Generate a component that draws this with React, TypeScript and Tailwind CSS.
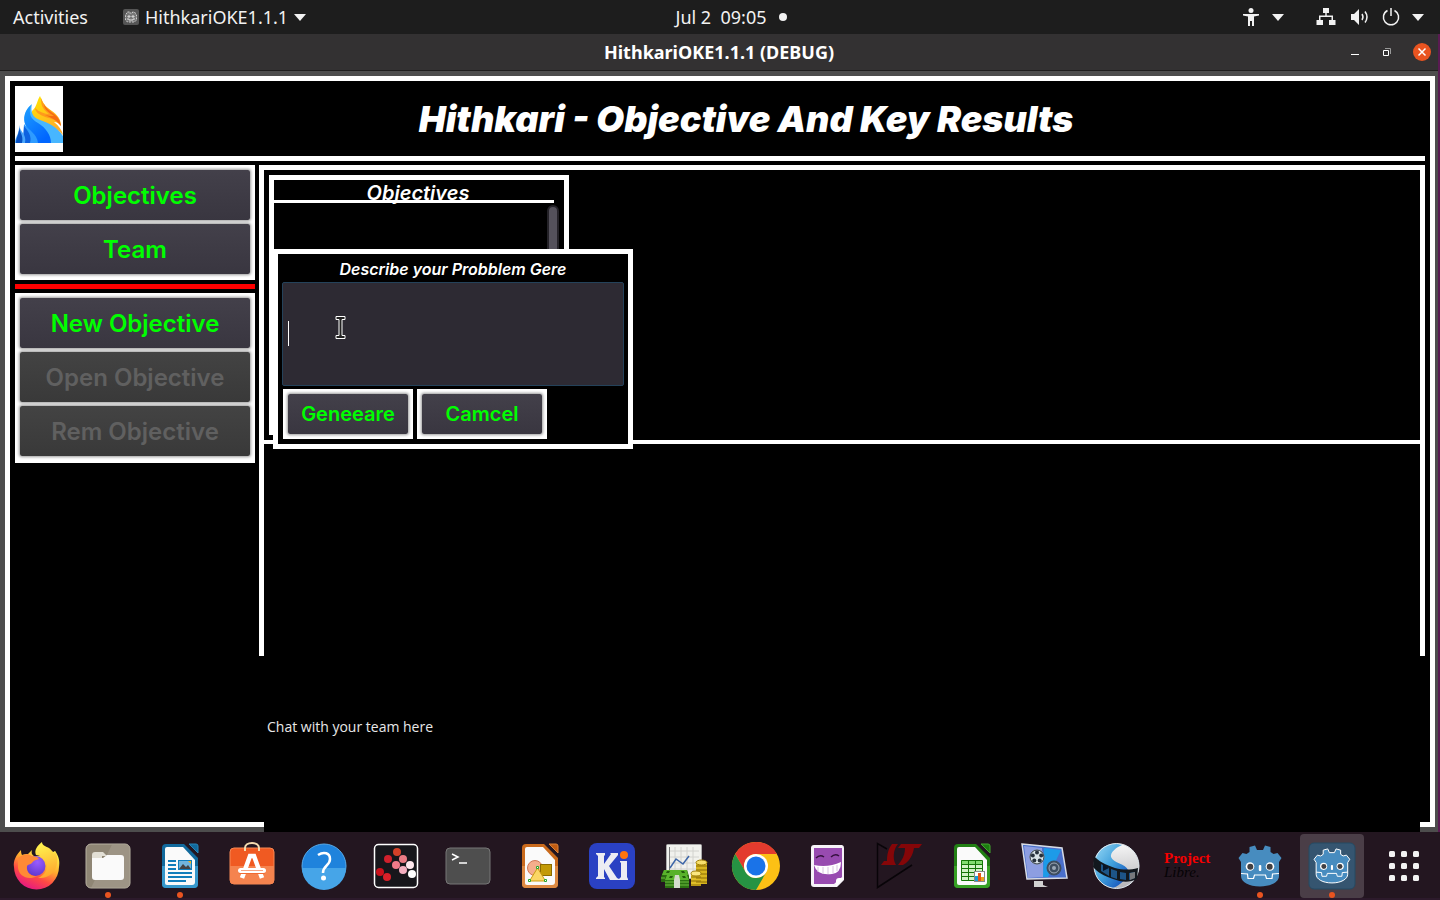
import type { ReactNode } from "react";

const dockIcons: { name: string; running?: boolean; active?: boolean; art: ReactNode }[] = [
  {
    name: "Firefox",
    art: (
      <>
        <defs>
          <linearGradient id="fxBody" x1="0.8" y1="0.1" x2="0.3" y2="1">
            <stop offset="0" stopColor="#fff04a" />
            <stop offset="0.35" stopColor="#ffab2e" />
            <stop offset="0.65" stopColor="#ff4a44" />
            <stop offset="1" stopColor="#e31587" />
          </linearGradient>
          <radialGradient id="fxGlobe" cx="0.6" cy="0.3" r="0.8">
            <stop offset="0" stopColor="#9a5cff" />
            <stop offset="1" stopColor="#5a35c8" />
          </radialGradient>
          <linearGradient id="fxTail" x1="0.3" y1="0" x2="0.5" y2="1">
            <stop offset="0" stopColor="#fff650" />
            <stop offset="1" stopColor="#ffa42c" />
          </linearGradient>
        </defs>
        <path d="M9 8c0 2 .4 4 1 5 2-1 4-1 6-1l4-4c-1 3 0 5 2 6h12l9-5c4 5 5 11 4 16a22.500 22.500 0 0 1-45 0C1 19 4 13 9 8z" fill="url(#fxBody)" />
        <path d="M30 0c-5 4-8 8-6 13 7 1 11 5 11 10 0 7-4 11-9 13 10 1 17-5 19-14 1-5 0-9-2-13l-1 3c-1-3-3-4-5-6-4-2-7-3-7-6z" fill="url(#fxTail)" />
        <circle cx="23.500" cy="24" r="10" fill="url(#fxGlobe)" />
        <path d="M6 16c5-4 10-5 14-2 3 1 5 0 7 3-3 1-5 1-7 4-2 2-4 1-5 3-1 7 5 11 10 10-9 5-18 0-19-8z" fill="#ff8a35" />
      </>
    ),
  },
  {
    name: "Files",
    running: true,
    art: (
      <>
        <rect x="2" y="2" width="44" height="44" rx="5" fill="#8f8675" stroke="#b8b1a2" />
        <path d="M28 2.500h13a5 5 0 0 1 5 5V41a5 5 0 0 1-5 5H7z" fill="#a79f8f" opacity="0.6" />
        <path d="M8 13a3 3 0 0 1 3-3h8l4 4h-5v9H8z" fill="#e2dfd5" />
        <path d="M8 16h11l4-3h14a3 3 0 0 1 3 3v19a3 3 0 0 1-3 3H11a3 3 0 0 1-3-3z" fill="#fafafa" />
      </>
    ),
  },
  {
    name: "LibreOffice Writer",
    running: true,
    art: (
      <>
        <path d="M10 2h18l14 14v26a4 4 0 0 1-4 4H10a4 4 0 0 1-4-4V6a4 4 0 0 1 4-4z" fill="#11699c" />
        <path d="M6 24h36v18a4 4 0 0 1-4 4H10a4 4 0 0 1-4-4z" fill="#3698cc" />
        <path d="M11 5h16l12 13v22a3 3 0 0 1-3 3H11a2 2 0 0 1-2-2V7a2 2 0 0 1 2-2z" fill="#fafafa" />
        <path d="M33 2h7a2 2 0 0 1 2 2v7z" fill="#11699c" stroke="#2685b8" />
        <path d="M12 19h8M12 23h8M12 27h8M12 31h24M12 35h24M12 39h18" stroke="#117dbb" strokeWidth="2" />
        <rect x="22.500" y="18.500" width="13" height="9" fill="#72b5dc" stroke="#117dbb" />
        <path d="M23 27l4-5 3 3 2-2 3 4z" fill="#444" />
        <path d="M32 19h3v3z" fill="#f3b51d" />
      </>
    ),
  },
  {
    name: "Ubuntu Software",
    art: (
      <>
        <rect x="2" y="6" width="44" height="36" rx="4" fill="#f05a22" stroke="#f78855" />
        <path d="M2 24h44v14a4 4 0 0 1-4 4H6a4 4 0 0 1-4-4z" fill="#f5834e" />
        <path d="M17 9V6c0-3 3-5 7-5s7 2 7 5v3" fill="none" stroke="#f5dcb0" strokeWidth="2" />
        <path d="M14 36l8-22h4l8 22" fill="none" stroke="#fff" strokeWidth="4.500" />
        <rect x="10" y="26" width="28" height="6" rx="3" fill="#f06a32" />
        <rect x="10" y="26" width="28" height="5" rx="2.500" fill="#fff" />
        <path d="M13 28.500h22" stroke="#f5a585" />
      </>
    ),
  },
  {
    name: "Help",
    art: (
      <>
        <circle cx="24" cy="24" r="22" fill="#1f83dc" stroke="#58aae8" />
        <path d="M2 26a22 22 0 0 0 44 0z" fill="#46a5e8" />
        <path d="M18 13c6-4 12-2 12 4 0 7-7 6-7 14" fill="none" stroke="#fff" strokeWidth="2.500" />
        <circle cx="23.500" cy="36" r="2.500" fill="#fff" />
      </>
    ),
  },
  {
    name: "Scatter",
    art: (
      <>
        <rect x="2.500" y="2.500" width="43" height="43" rx="4" fill="#17161b" stroke="#fff" strokeWidth="1.500" />
        <circle cx="25" cy="10" r="4" fill="#d34028" />
        <circle cx="16" cy="17" r="4" fill="#cf202c" />
        <circle cx="31" cy="17" r="4" fill="#ea7b84" />
        <circle cx="24" cy="23" r="4" fill="#f27a89" />
        <circle cx="38" cy="23" r="4" fill="#ffe8ee" />
        <circle cx="31" cy="28" r="4" fill="#f4afc0" />
        <circle cx="8" cy="30" r="4" fill="#cb111c" />
        <circle cx="15" cy="35" r="4" fill="#da2029" />
        <circle cx="40" cy="32" r="4" fill="#fff" />
      </>
    ),
  },
  {
    name: "Terminal",
    art: (
      <>
        <rect x="2" y="6" width="44" height="36" rx="4" fill="#4e4e4e" stroke="#777" />
        <path d="M8 12l6 3-6 3M15 21h8" fill="none" stroke="#fff" strokeWidth="1.500" />
      </>
    ),
  },
  {
    name: "LibreOffice Draw",
    art: (
      <>
        <path d="M10 2h18l14 14v26a4 4 0 0 1-4 4H10a4 4 0 0 1-4-4V6a4 4 0 0 1 4-4z" fill="#c96a1c" />
        <path d="M6 24h36v18a4 4 0 0 1-4 4H10a4 4 0 0 1-4-4z" fill="#dd8a42" />
        <path d="M11 5h16l12 13v22a3 3 0 0 1-3 3H11a2 2 0 0 1-2-2V7a2 2 0 0 1 2-2z" fill="#fafafa" />
        <path d="M33 2h7a2 2 0 0 1 2 2v7z" fill="#c05c12" stroke="#dc8136" />
        <circle cx="19" cy="26" r="7.500" fill="#f4ae8c" stroke="#cf7757" />
        <rect x="24.500" y="22.500" width="11" height="11" fill="#c39a06" stroke="#8c6b00" />
        <path d="M21.500 26l8 13h-16z" fill="#fbd765" stroke="#ca9d12" />
        <path d="M20.500 24.500h2v2h-2zM12.500 37.500h2v2h-2zM28.500 37.500h2v2h-2z" fill="#fff" stroke="#25a72b" />
      </>
    ),
  },
  {
    name: "KiCad",
    art: (
      <>
        <rect x="1" y="1" width="46" height="46" rx="8" fill="#2a41c3" />
        <path d="M8 11h9v2l-1 1v8l7-10-1-1h8v2l-9 11 8 12 2 1v1h-9l-6-11v8l1 1v1H8v-1l2-2V14l-2-2z" fill="#ececf3" />
        <path d="M32 19h7v16l1 2v1h-9v-1l2-2V21l-1-1z" fill="#ececf3" />
        <circle cx="36" cy="13" r="4" fill="#ff740d" />
      </>
    ),
  },
  {
    name: "GnuCash",
    art: (
      <>
        <rect x="6.500" y="2.500" width="35" height="34" rx="1" fill="#f1f1ed" stroke="#aaa" />
        <path d="M9 9h30M9 15h30M9 21h30M9 27h30M15 5v28M21 5v28M27 5v28M33 5v28" stroke="#d2d2ce" />
        <path d="M9.500 5v24" stroke="#777" />
        <path d="M10 26l6-9 7 5 6-8" fill="none" stroke="#3d66a8" strokeWidth="1.500" />
        <path d="M36 21h11v21H36z" fill="#d8b520" />
        <path d="M31 32h10v12H31z" fill="#e0be28" />
        <path d="M36 24h11M36 28h11M36 32h11M36 36h11M36 40h11M31 35h10M31 39h10M31 43h10" stroke="#8b6d04" />
        <ellipse cx="41.500" cy="20.500" rx="5.500" ry="2.500" fill="#f8e06c" stroke="#9d7c07" />
        <ellipse cx="36" cy="31.500" rx="5" ry="2.500" fill="#fbe780" stroke="#9d7c07" />
        <path d="M4 28h23l2 6v6H1v-5z" fill="#296b10" />
        <path d="M4 28h23l1 5H2z" fill="#58b22b" />
        <path d="M7 33h20l2 5v8H5v-8z" fill="#2b7112" />
        <path d="M7 33h20l2 5H5z" fill="#5ab52e" />
        <path d="M13 34h-3l-1 2h3zM22 34h3l1 2h-3zM10 29H7l-1 2h3zM21 29h3l1 2h-3z" fill="#215c0c" />
        <path d="M5 40h24M5 43h24M1 36h4" stroke="#6fbd3f" />
        <path d="M15 33h4l1 5v8h-6v-8z" fill="#d4dbcd" />
      </>
    ),
  },
  {
    name: "Chrome",
    art: (
      <>
        <circle cx="24" cy="24" r="24" fill="#fcc015" />
        <path d="M3.200 12A24 24 0 0 1 44.800 12H24a12 12 0 0 0-10.400 18z" fill="#e33b2e" />
        <path d="M3.200 12A24 24 0 0 0 24 48l10.400-18A12 12 0 0 1 13.600 30z" fill="#269343" />
        <circle cx="24" cy="24" r="12" fill="#fff" />
        <circle cx="24" cy="24" r="9.500" fill="#1a73e8" />
      </>
    ),
  },
  {
    name: "Cheese reader",
    art: (
      <>
        <path d="M10 3h28a3 3 0 0 1 2 3v32l-7 7H10a3 3 0 0 1-3-3V6a3 3 0 0 1 3-3z" fill="#f6f3f8" />
        <path d="M10 6h28v29l-8 7H10z" fill="#984bb0" />
        <path d="M12 16q4-4 8-1M27 15q4-4 8-1" fill="none" stroke="#36113f" strokeWidth="1.500" />
        <path d="M10 23q14 3 27-3 0 11-9 12-15 2-18-9z" fill="#fff" />
        <path d="M14 25v5M19 25v7M24 25v7M29 24v7M33 23v6" stroke="#d9c3e0" />
        <path d="M32 44v-5q0-3 3-3h5z" fill="#fff" />
      </>
    ),
  },
  {
    name: "LTspice",
    art: (
      <>
        <path d="M11 7L1.500 1.500v44L36 23" fill="none" stroke="#080408" strokeWidth="1.500" />
        <path d="M16 2h6c-5 6-5 14-3 19l1 2H5l3-4h3c0-6 1-12 5-17z" fill="#850608" />
        <path d="M25 2h21l-3 4h-5c-1 7-5 14-11 17h-5l3-4c3-4 4-9 4-13h-7z" fill="#850608" />
      </>
    ),
  },
  {
    name: "LibreOffice Calc",
    art: (
      <>
        <path d="M10 2h18l14 14v26a4 4 0 0 1-4 4H10a4 4 0 0 1-4-4V6a4 4 0 0 1 4-4z" fill="#217f13" />
        <path d="M6 24h36v18a4 4 0 0 1-4 4H10a4 4 0 0 1-4-4z" fill="#37a024" />
        <path d="M11 5h16l12 13v22a3 3 0 0 1-3 3H11a2 2 0 0 1-2-2V7a2 2 0 0 1 2-2z" fill="#fafafa" />
        <path d="M33 2h7a2 2 0 0 1 2 2v7z" fill="#1b7b10" stroke="#43a82f" />
        <rect x="13" y="18" width="21" height="20" fill="#d2f2c6" />
        <path d="M13 18h21v5H13z" fill="#83dc70" />
        <path d="M13.500 18.500h21v20h-21zM13 22.500h21M13 26.500h21M13 30.500h21M13 34.500h21M20.500 18v20M27.500 18v20" fill="none" stroke="#157507" />
        <rect x="26.500" y="29.500" width="10" height="10" fill="#fff" stroke="#888" />
        <path d="M27 34h3v5h-3z" fill="#1a9bd8" />
        <path d="M30 31h3v8h-3z" fill="#e65716" />
        <path d="M33 35h3v4h-3z" fill="#eda51c" />
      </>
    ),
  },
  {
    name: "Media player",
    art: (
      <>
        <path d="M2 2l40 4 5 30-40 1z" fill="#496fcb" stroke="#d7dbe5" strokeWidth="1.500" />
        <path d="M4 4l18 2 2 29-16 1z" fill="#8d9ee1" />
        <path d="M24 6l17 2-13 27h-5z" fill="#1d9be8" />
        <circle cx="17" cy="15" r="7.500" fill="#d9e3e8" />
        <circle cx="17" cy="15" r="7" fill="none" stroke="#27313d" />
        <g fill="#27313d">
          <circle cx="17" cy="10.500" r="2" />
          <circle cx="12.800" cy="13.500" r="2" />
          <circle cx="14.300" cy="18.500" r="2" />
          <circle cx="19.700" cy="18.500" r="2" />
          <circle cx="21.200" cy="13.500" r="2" />
        </g>
        <circle cx="34" cy="26" r="7.500" fill="#3e4e60" />
        <circle cx="34" cy="26" r="5" fill="none" stroke="#9faab7" />
        <circle cx="34" cy="26" r="2" fill="#9aa7b5" />
        <path d="M14 39h9v4l5 2H14z" fill="#d1d1d1" />
      </>
    ),
  },
  {
    name: "OpenShot",
    art: (
      <>
        <defs>
          <linearGradient id="osLeft" x1="0" y1="0" x2="1" y2="1">
            <stop offset="0" stopColor="#9bdcf8" />
            <stop offset="0.500" stopColor="#3f9fdb" />
            <stop offset="1" stopColor="#0b3fb4" />
          </linearGradient>
          <linearGradient id="osRight" x1="0.5" y1="0" x2="0.6" y2="1">
            <stop offset="0" stopColor="#f8f8f8" />
            <stop offset="1" stopColor="#b4b4b8" />
          </linearGradient>
        </defs>
        <circle cx="24.500" cy="24" r="22.500" fill="url(#osRight)" />
        <path d="M30 3C16-2 2 8 2 24c0 11 8 20 19 22 8-3 15-10 15-18-2-6-15-7-17-13-1-5 6-10 11-12z" fill="url(#osLeft)" />
        <circle cx="24.500" cy="24" r="22.500" fill="none" stroke="#dfe8ee" />
        <path d="M2 14c4 5 12 9 21 12 8 2 15 2 23 0l-1 11c-8 4-16 3-24 0-9-3-16-7-20-12z" fill="#12181e" />
        <path d="M9 22l8 4v8l-8-5zM19 27l6 2v8l-6-2zM28 30l6 1v7l-6-1zM37 31l6-1v6l-6 2z" fill="#1d5588" />
        <path d="M38 31l5-1v6l-5 2z" fill="#77797d" />
        <path d="M11 22l6 4-6 3z" fill="#061528" />
      </>
    ),
  },
  {
    name: "ProjectLibre",
    art: (
      <g fontFamily='"Liberation Serif", serif' fontWeight="700">
        <text x="0" y="21" fontSize="15" fill="#f40000">Project</text>
        <text x="0" y="35" fontSize="15" fontStyle="italic" fontWeight="400" fill="#050305">Libre.</text>
      </g>
    ),
  },
  { name: "Godot Engine", running: true, art: <GodotHead outline={false} /> },
  {
    name: "HithkariOKE1.1.1",
    running: true,
    active: true,
    art: (
      <>
        <rect x="1" y="1" width="46" height="46" rx="5" fill="#355570" stroke="#244a63" />
        <g transform="translate(4 4) scale(0.830)">
          <GodotHead outline />
        </g>
      </>
    ),
  },
  {
    name: "Show Applications",
    art: (
      <g fill="#f2f2f2">
        {[9, 21, 33].map((y) =>
          [9, 21, 33].map((x) => <rect key={`${x}-${y}`} x={x} y={y} width="6" height="6" rx="1.500" />)
        )}
      </g>
    ),
  },
];

function GodotHead({ outline }: { outline: boolean }) {
  return (
    <>
      <path
        d="M13.500 5L19 3.500 21 8h6l2-4.500L34.500 5v5l3 2 4-1 4 5-2.500 4v14c0 6-8 10.500-19 10.500S5 40 5 34V20l-2.500-4 4-5 4 1 3-2z"
        fill="#478cbf"
        stroke={outline ? "#fff" : "none"}
        strokeWidth="1.200"
        strokeLinejoin="round"
      />
      <path d="M5 31.500l6.500.5.5 4.500h5.500l1-3.500h11l1 3.500H36l.5-4.500 6.500-.5" fill="none" stroke="#fff" strokeWidth="1.200" />
      <circle cx="14" cy="24.500" r="4.300" fill="#fff" />
      <circle cx="34" cy="24.500" r="4.300" fill="#fff" />
      <circle cx="14.300" cy="24.800" r="3" fill="#414042" />
      <circle cx="33.700" cy="24.800" r="3" fill="#414042" />
      <rect x="22.800" y="23" width="2.500" height="6" rx="1" fill="#fff" />
    </>
  );
}

function Caret() {
  return (
    <svg viewBox="0 0 12 7" className="h-[7px] w-3 shrink-0" fill="#f2f2f2" aria-hidden="true">
      <path d="M0 0h12L6 7z" />
    </svg>
  );
}

function TopBar() {
  return (
    <header className="grid h-[34px] grid-cols-[1fr_auto_1fr] items-center bg-[#1d1d1d] font-['Noto_Sans',sans-serif] text-lg leading-6 text-[#f2f2f2]">
      <div className="flex items-center">
        <button className="w-[101px] text-center">Activities</button>
        <button className="ml-[22px] flex items-center gap-1.5">
          <svg viewBox="0 0 16 16" className="h-4 w-4" aria-hidden="true">
            <rect width="16" height="16" rx="2" fill="#555" />
            <path d="M4.500 3h2v1h3V3h2l2 3v5l-2 2h-7l-2-2V6z" fill="#777" stroke="#ccc" strokeDasharray="2 1" />
            <path d="M5 7h2v1H5zM9 7h2v1H9zM4 10h2v1h4v-1h2" fill="none" stroke="#ddd" />
          </svg>
          <span>HithkariOKE1.1.1</span>
          <Caret />
        </button>
      </div>
      <button className="flex items-center gap-3 pl-[22px] whitespace-pre">
        <span>Jul 2  09:05</span>
        <span className="h-2 w-2 rounded-full bg-[#f2f2f2]" />
      </button>
      <div className="flex items-center justify-end pr-4">
        <button aria-label="Accessibility" className="flex items-center gap-3">
          <svg viewBox="0 0 18 18" className="h-[18px] w-[18px]" fill="#f2f2f2">
            <circle cx="9" cy="2.500" r="2.500" />
            <path d="M1 6h16v1.500l-5 1V18h-2v-5H8v5H6V8.500l-5-1z" />
          </svg>
          <Caret />
        </button>
        <button aria-label="System menu" className="ml-8 flex items-center gap-3">
          <svg viewBox="0 0 20 18" className="mr-0.5 h-[18px] w-5" fill="#f2f2f2">
            <path d="M7 0h6v5h-2.300v2.500H17V12h2.500v5h-6.500v-5h2.500V9h-11v3H7v5H.5v-5H3V7.500h6.300V5H7z" />
          </svg>
          <svg viewBox="0 0 20 18" className="h-[18px] w-5" fill="#f2f2f2">
            <path d="M1 6h3l5-5v16l-5-5H1z" />
            <path d="M12 6q2 3 0 6M15 3.500q4 5.500 0 11" fill="none" stroke="#f2f2f2" strokeWidth="1.500" />
          </svg>
          <svg viewBox="0 0 18 18" className="h-[18px] w-[18px]" fill="none" stroke="#f2f2f2" strokeWidth="1.500">
            <path d="M5.500 2.500a7.600 7.600 0 1 0 7 0M9 0v8" />
          </svg>
          <Caret />
        </button>
      </div>
    </header>
  );
}

function TitleBar() {
  return (
    <div className="grid h-[37px] grid-cols-[1fr_auto_1fr] items-center border-b border-[#1f1e1e] bg-[#333132] font-['Noto_Sans',sans-serif] text-white">
      <div />
      <h1 className="text-lg leading-6 font-bold">HithkariOKE1.1.1 (DEBUG)</h1>
      <div className="flex items-center justify-end gap-5 pr-[7px]">
        <button aria-label="Minimize" className="flex h-3 w-3 items-center justify-center">
          <span className="mt-1 h-px w-2 bg-white" />
        </button>
        <button aria-label="Restore" className="h-3 w-3">
          <svg viewBox="0 0 12 12" fill="none">
            <path d="M4 2.500h5.500V8" stroke="#999" />
            <path d="M2.500 4.500h5v5h-5z" stroke="#fff" />
          </svg>
        </button>
        <button aria-label="Close" className="h-[18px] w-[18px] rounded-full bg-[#e95420]">
          <svg viewBox="0 0 18 18">
            <path d="M5.500 5.500l7 7M12.500 5.500l-7 7" stroke="#fff" strokeWidth="1.500" />
          </svg>
        </button>
      </div>
    </div>
  );
}

function Logo() {
  return (
    <svg viewBox="0 0 48 66" className="h-[66px] w-12 bg-white" role="img" aria-label="Hithkari">
      <defs>
        <linearGradient id="logoBlue" x1="0" y1="0" x2="0.600" y2="1">
          <stop offset="0" stopColor="#1fa0ff" />
          <stop offset="1" stopColor="#0066ff" />
        </linearGradient>
        <linearGradient id="logoYellow" x1="0" y1="0" x2="0.500" y2="1">
          <stop offset="0" stopColor="#ffe600" />
          <stop offset="1" stopColor="#ffae2a" />
        </linearGradient>
      </defs>
      <path d="M25 10C28 17 30 20 34 23C40 27 46 31 46 40C44 37 42 36 39 36C44 40 47 44 48 49C40 40 30 38 23 35C18 33 16 29 17 25C22 21 22 14 25 10z" fill="url(#logoYellow)" />
      <path d="M26 12C28 18 31 21 35 24C40 28 44 31 46 40C40 32 34 33 28 30C23 28 20 25 20 22C24 26 30 28 34 28C27 23 26 18 26 12z" fill="#ff9a1c" />
      <path d="M29 18C31 23 35 25 39 28C43 31 45 34 46 40C41 33 36 32 30 29C34 30 37 30 39 30C33 26 29 23 29 18z" fill="#f66d12" />
      <path d="M17 18C15 26 18 32 25 34C34 37 42 41 48 50V57H8C14 50 13 44 10 38C8 29 12 22 17 18z" fill="#47b6ff" />
      <path d="M16 19C13 28 16 33 23 37C31 42 36 49 36 57H12C16 50 14 44 11 40C7 32 10 24 16 19z" fill="url(#logoBlue)" />
      <path d="M9 38C14 44 22 48 23 57H8z" fill="#2e9bff" />
      <path d="M9 40C13 45 17 50 15 57H8z" fill="#0d62e0" />
      <path d="M4 39C5 46 12 48 10 57H0C0 51 5 47 4 39z" fill="#4aa6fb" />
      <path d="M4 40C4 46 9 49 7 57H1C1 51 5 47 4 40z" fill="#0650c2" />
    </svg>
  );
}

function MenuButton({ children, disabled }: { children: ReactNode; disabled?: boolean }) {
  return (
    <button
      disabled={disabled}
      className="h-[50px] rounded-xs bg-linear-to-b from-[#43404a] to-[#393640] pt-0.5 text-2xl font-semibold text-[#00ff00] shadow-[0_0_3px_1px_rgba(0,0,0,0.4)] disabled:from-[#434343] disabled:to-[#393939] disabled:text-[#606060]"
    >
      {children}
    </button>
  );
}

function DialogButton({ children }: { children: ReactNode }) {
  return (
    <div className="border-5 border-white bg-white">
      <button className="h-10 w-[120px] rounded-xs bg-linear-to-b from-[#43404a] to-[#393640] text-xl font-semibold text-[#00ff00] shadow-[0_0_3px_1px_rgba(0,0,0,0.4)]">
        {children}
      </button>
    </div>
  );
}

function Sidebar() {
  return (
    <nav className="flex w-60 shrink-0 flex-col gap-1">
      <div className="flex flex-col gap-1 bg-white px-[5px] pt-[5px] pb-1.5">
        <MenuButton>Objectives</MenuButton>
        <MenuButton>Team</MenuButton>
      </div>
      <div className="h-[5px] bg-[#ff0000]" />
      <div className="flex flex-col gap-1 bg-white px-[5px] pt-[5px] pb-[7px]">
        <MenuButton>New Objective</MenuButton>
        <MenuButton disabled>Open Objective</MenuButton>
        <MenuButton disabled>Rem Objective</MenuButton>
      </div>
    </nav>
  );
}

function ProblemDialog() {
  return (
    <div
      role="dialog"
      aria-labelledby="problem-label"
      className="absolute top-[79px] left-[9px] w-[360px] border-5 border-white bg-black px-1 pt-[3px] pb-[5px]"
    >
      <label id="problem-label" htmlFor="problem" className="block pb-px text-center text-base leading-6 font-semibold text-white italic">
        Describe your Probblem Gere
      </label>
      <div className="relative">
        <input
          id="problem"
          type="text"
          className="block h-[104px] w-full rounded-xs border border-[#24425a] bg-[#2d2a33] px-1.5 text-xl text-white outline-none"
        />
        <span className="absolute top-[39px] left-1.5 h-[25px] w-px bg-white" />
        <svg viewBox="0 0 11 23" className="absolute top-[34px] left-[53px] h-[23px] w-[11px]" aria-hidden="true">
          <path d="M1 .5h9v3H7v16h3v3H1v-3h3v-16H1z" fill="#222" stroke="#fff" />
        </svg>
      </div>
      <div className="mt-[3px] flex gap-1 pl-px">
        <DialogButton>Geneeare</DialogButton>
        <DialogButton>Camcel</DialogButton>
      </div>
    </div>
  );
}

function Workspace() {
  return (
    <main className="-mb-[15px] flex min-w-0 flex-1 flex-col">
      <div className="relative flex flex-1 flex-col border-x-5 border-t-5 border-white">
        <div className="h-[274px] border-b-4 border-white p-[5px]">
          <section className="h-[260px] w-[300px] border-5 border-white">
            <h3 className="h-[23px] w-[280px] border-b-3 border-white pl-2 text-center text-xl leading-[26px] font-semibold text-white italic">
              Objectives
            </h3>
            <div className="mt-0.5 mr-[5px] ml-auto h-52 w-3 rounded-full border-2 border-[#242228] bg-[#54515b]" />
          </section>
        </div>
        <ProblemDialog />
      </div>
      <div className="relative mx-[5px] h-44 bg-black px-[3px] pt-[61px] font-['Open_Sans','Noto_Sans',sans-serif] text-sm leading-5 text-[#e8e8e8]">
        Chat with your team here
      </div>
    </main>
  );
}

function Dock() {
  return (
    <footer className="flex h-[68px] items-start justify-between border-b-2 border-[#2c1a2b] bg-[#231620]">
      {dockIcons.map((app) => (
        <button key={app.name} aria-label={app.name} className="flex h-[66px] w-[72px] justify-center pt-0.5">
          <span
            className={
              app.active
                ? "flex h-16 w-16 flex-col items-center rounded-sm bg-[#4a3e47] pt-2"
                : "flex h-16 w-16 flex-col items-center pt-2"
            }
          >
            <svg viewBox="0 0 48 48" className="h-12 w-12 overflow-visible">
              {app.art}
            </svg>
            {app.running && <span className="mt-0.5 h-1.5 w-1.5 rounded-full bg-[#e95420]" />}
          </span>
        </button>
      ))}
    </footer>
  );
}

export default function App() {
  return (
    <div className="flex min-h-screen flex-col bg-[#5a1b52] font-['Inter',sans-serif]">
      <TopBar />
      <div className="mr-0.5 flex flex-1 flex-col">
        <TitleBar />
        <div className="flex flex-1 flex-col bg-[#4d4d4d] py-[5px] pr-[3px] pl-[5px]">
          <div className="flex flex-1 flex-col border-5 border-white bg-black p-[5px]">
            <div className="flex items-center gap-1">
              <Logo />
              <h2 className="flex-1 text-center text-4xl font-black text-white italic">
                Hithkari - Objective And Key Results
              </h2>
            </div>
            <div className="mt-1 h-[5px] bg-white" />
            <div className="mt-1 flex flex-1 gap-1">
              <Sidebar />
              <Workspace />
            </div>
          </div>
        </div>
      </div>
      <Dock />
    </div>
  );
}
